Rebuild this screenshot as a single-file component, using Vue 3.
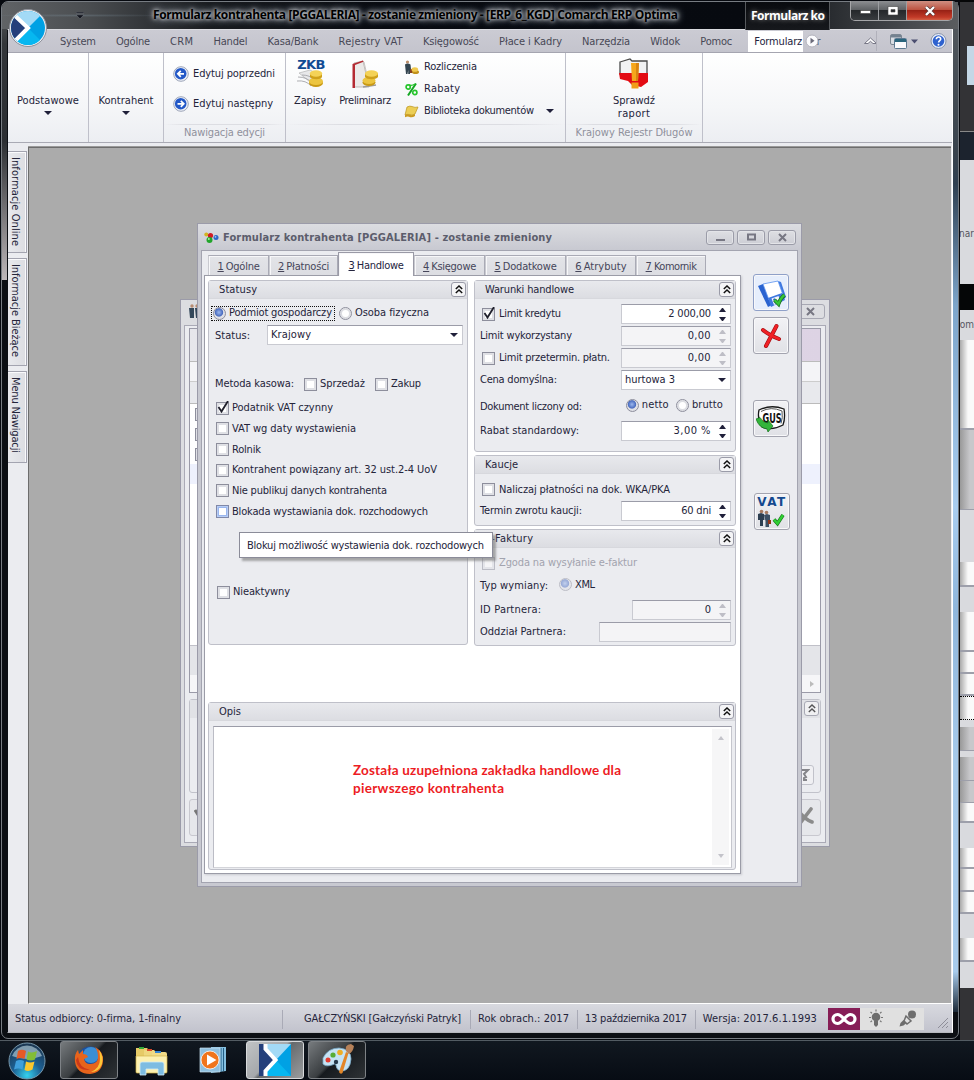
<script setup>
const vFit = {
  mounted(el, { value }) {
    const range = document.createRange()
    range.selectNodeContents(el)
    const natural = range.getBoundingClientRect()
    const size = Math.max(natural.width, natural.height > 40 ? natural.height : 0)
    const n = el.textContent.length
    if (n > 1) el.style.letterSpacing = (value - size) / (n - 1) + 'px'
  },
}

const menu = [
  ['System', 36], ['Ogólne', 34], ['CRM', 23], ['Handel', 34], ['Kasa/Bank', 51], ['Rejestry VAT', 64],
  ['Księgowość', 56], ['Płace i Kadry', 63], ['Narzędzia', 48], ['Widok', 30], ['Pomoc', 32],
]
const sideTabs = [
  { text: 'Informacje Online', w: 89, cls: 's1' },
  { text: 'Informacje Bieżące', w: 93, cls: 's2' },
  { text: 'Menu Nawigacji', w: 76, cls: 's3' },
]
const tabs = [
  { k: '1', t: 'Ogólne', w: 61, f: 35 },
  { k: '2', t: 'Płatności', w: 69, f: 44 },
  { k: '3', t: 'Handlowe', w: 76, f: 48, on: true },
  { k: '4', t: 'Księgowe', w: 71, f: 46 },
  { k: '5', t: 'Dodatkowe', w: 81, f: 55 },
  { k: '6', t: 'Atrybuty', w: 70, f: 44 },
  { k: '7', t: 'Komornik', w: 70, f: 44 },
]
const checks = [
  { t: 'Podatnik VAT czynny', w: 101, on: true, h: 20 },
  { t: 'VAT wg daty wystawienia', w: 124, h: 21 },
  { t: 'Rolnik', w: 29, h: 21 },
  { t: 'Kontrahent powiązany art. 32 ust.2-4 UoV', w: 205, h: 20 },
  { t: 'Nie publikuj danych kontrahenta', w: 155, h: 21 },
  { t: 'Blokada wystawiania dok. rozchodowych', w: 196, h: 21, hot: true },
]
const strips = [
  { h: 2, c: 'k' }, { h: 44, c: 'dk' }, { h: 39, c: 'ice' }, { h: 46, c: 'dk' }, { h: 29, c: 'navy' },
  { h: 124, c: 'lite tail', t: 'nar' }, { h: 26, c: 'k' }, { h: 30, c: 'lite mid', t: 'Pom' }, { h: 90, c: 'wh' }, { h: 80, c: 'gy' },
  { h: 52, c: 'lite' }, { h: 25, c: 'wh' }, { h: 25, c: 'lite' }, { h: 40, c: 'wh' }, { h: 22, c: 'wh' },
  { h: 22, c: 'wh' }, { h: 24, c: 'wh dots' }, { h: 7, c: 'lite' }, { h: 24, c: 'gy' }, { h: 6, c: 'lite' },
  { h: 24, c: 'gy' }, { h: 22, c: 'gy' }, { h: 20, c: 'wh' }, { h: 25, c: 'lite' }, { h: 21, c: 'wh' },
  { h: 23, c: 'wh' }, { h: 22, c: 'wh' }, { h: 24, c: 'lite' }, { h: 24, c: 'wh' }, { h: 26, c: 'lite' }, { h: 90, c: 'dk' },
]
</script>

<template>
  <div class="desktop">
    <div class="behind">
      <div v-for="(s, i) in strips" :key="i" class="strip" :class="s.c" :style="{ height: s.h + 'px' }">{{ s.t }}</div>
    </div>

    <div class="app">
      <div class="frame-l"></div>
      <div class="frame-r"></div>
      <header class="caption">
        <svg class="qat" width="8" height="7" viewBox="0 0 8 7"><path d="M0 0h8v1.3H0zM0 2.8h8L4 6.8z" fill="#11131c" stroke="#8c8f98" stroke-width=".4" /></svg>
        <span v-fit="525" class="caption-text">Formularz kontrahenta [PGGALERIA] - zostanie zmieniony - [ERP_6_KGD] Comarch ERP Optima</span>
        <div class="context"><span v-fit="74">Formularz ko</span></div>
        <div class="winbtns">
          <div class="wb w1"><svg width="12" height="10" viewBox="0 0 12 10"><rect x="1.5" y="4.5" width="10" height="3" fill="#fff" stroke="#444" stroke-width=".6" /></svg></div>
          <div class="wb w2"><svg width="12" height="10" viewBox="0 0 12 10"><path fill="#fff" fill-rule="evenodd" stroke="#444" stroke-width=".6" d="M1 .5h10v8.500H1zM4 3.500v2.500h4V3.500z" /></svg></div>
          <div class="wb w3"><svg width="12" height="10" viewBox="0 0 12 10"><path d="M2 1l8 8M10 1l-8 8" stroke="#533" stroke-width="3.600" /><path d="M2 1l8 8M10 1l-8 8" stroke="#fff" stroke-width="2.400" /></svg></div>
        </div>
      </header>

      <div class="client">
        <nav class="menu">
          <span v-for="m in menu" :key="m[0]" v-fit="m[1]">{{ m[0] }}</span>
          <div class="active-tab"><span v-fit="48">Formularz</span></div>
          <span class="rest">r</span>
          <svg class="scroller" width="14" height="14" viewBox="0 0 14 14"><circle cx="7" cy="7" r="6" fill="#fbfbfd" stroke="#b3b3bd" /><path d="M5.500 3.800v6L9.500 6.800z" fill="#6b6b7a" /></svg>
          <svg class="menu-icons" width="90" height="20" viewBox="0 0 90 20">
            <path d="M3.500 12.500l6-5.500 6 5.500h-3.500l-2.500-2.200-2.500 2.200z" fill="#fff" stroke="#777786" />
            <path d="M15.500 0v20" stroke="#b1b1bb" />
            <rect x="29.500" y="3.500" width="11" height="10" rx="1.500" fill="#d9dde3" stroke="#7b8692" /><path d="M30 4h10v2.500H30z" fill="#748290" />
            <rect x="33.500" y="7.500" width="12" height="10" rx="1" fill="#fafafd" stroke="#5b7890" /><path d="M34 8h11v3H34z" fill="#2a657d" />
            <path d="M50 8.500h7l-3.500 4z" fill="#4b4e70" />
            <circle cx="77.500" cy="10" r="7.500" fill="#e9eef8" stroke="#8794ab" /><circle cx="77.500" cy="10" r="5.800" fill="#2e62cf" />
            <path d="M75.300 8.200c0-3 4.700-2.700 4.400 0-.2 1.500-2.100 1.500-2.100 3.300" fill="none" stroke="#fff" stroke-width="1.600" /><circle cx="77.500" cy="13.700" r="1" fill="#fff" />
          </svg>
        </nav>

        <section class="ribbon">
          <div class="grp g1 big"><span v-fit="62">Podstawowe</span><i class="dn"></i></div>
          <div class="grp g2 big"><span v-fit="55">Kontrahent</span><i class="dn"></i></div>
          <div class="grp g3">
            <div class="nav-item">
              <svg width="16" height="16" viewBox="0 0 16 16"><circle cx="8" cy="8" r="7.300" fill="#eef1f8" stroke="#9da5b8" /><circle cx="7.700" cy="7.700" r="5.800" fill="#2358c7" /><path d="M11 7.800H5M7.800 4.800l-3 3 3 3" fill="none" stroke="#fff" stroke-width="1.700" /></svg>
              <span v-fit="82">Edytuj poprzedni</span>
            </div>
            <div class="nav-item">
              <svg width="16" height="16" viewBox="0 0 16 16"><circle cx="8" cy="8" r="7.300" fill="#eef1f8" stroke="#9da5b8" /><circle cx="7.700" cy="7.700" r="5.800" fill="#2358c7" /><path d="M4.500 7.800h6M7.800 4.800l3 3-3 3" fill="none" stroke="#fff" stroke-width="1.700" /></svg>
              <span v-fit="80">Edytuj następny</span>
            </div>
            <div class="foot"><span v-fit="81">Nawigacja edycji</span></div>
          </div>
          <div class="grp g4">
            <div class="g4-main">
              <div class="bigbtn zap">
                <div class="zkb"><b v-fit="28">ZKB</b>
                  <svg width="30" height="20" viewBox="0 0 30 20"><path d="M3 4l11-3 8 4-8 8z" fill="#e8e8ea" stroke="#aaa" stroke-width=".6" /><path d="M2 8q9 0 14 6M1 12q9-1 14 5M6 6q8 0 12 5" fill="none" stroke="#a5a5a9" stroke-width=".9" /><ellipse cx="20" cy="14" rx="7" ry="4" fill="#c99a14" /><ellipse cx="20" cy="12.200" rx="7" ry="3.800" fill="#ecc540" /><path d="M14 4v4c2 3 11 3 12 0V4z" fill="#cfa01b" /><ellipse cx="20" cy="4.500" rx="6.200" ry="3.300" fill="#f4d257" /></svg>
                </div>
                <span v-fit="32">Zapisy</span>
              </div>
              <div class="bigbtn pre">
                <svg width="32" height="32" viewBox="0 0 32 32"><path d="M5 4l9-2 6 26H5z" fill="#ebe9e8" stroke="#a9a4a2" stroke-width=".7" /><path d="M3.500 5L14 1.500l.5 1.300L6 6v23H3.500z" fill="#b42a32" /><path d="M15 3l5 22" stroke="#c9c5c3" /><path d="M14 28l13-2" stroke="#9e9b98" stroke-width="1.500" /><ellipse cx="20" cy="23.500" rx="6.500" ry="3.500" fill="#c99a14" /><ellipse cx="20" cy="21.500" rx="6.500" ry="3.500" fill="#ecc540" /><path d="M16 14v4c2 3 11 3 13 0v-4z" fill="#cfa01b" /><ellipse cx="22.500" cy="14.500" rx="6.500" ry="3.300" fill="#f4d257" /></svg>
                <span v-fit="52">Preliminarz</span>
              </div>
              <div class="smalls">
                <div><svg width="15" height="15" viewBox="0 0 15 15"><circle cx="3.500" cy="2" r="1.600" fill="#bb8d68" /><path d="M1 4.500q2.500-2 5.500 0L7 9H6v5H4.200v-4L3.500 14H2z" fill="#344550" /><path d="M6 9h3v4H6z" fill="#873f21" /><ellipse cx="11.500" cy="12" rx="3.500" ry="2" fill="#c2921b" /><ellipse cx="10.800" cy="9.500" rx="3.300" ry="2.300" fill="#f0c94f" /></svg><span v-fit="53">Rozliczenia</span></div>
                <div><svg width="15" height="15" viewBox="0 0 15 15"><path d="M12 1.500L4 13.500" stroke="#12a621" stroke-width="2" /><circle cx="4.200" cy="5" r="2.100" fill="none" stroke="#27c52c" stroke-width="1.700" /><path d="M5 3q3 1 6-1" fill="none" stroke="#27c52c" stroke-width="1.400" /><circle cx="10.800" cy="10.500" r="2.100" fill="none" stroke="#27c52c" stroke-width="1.700" /></svg><span v-fit="36">Rabaty</span></div>
                <div><svg width="15" height="15" viewBox="0 0 15 15"><path d="M3 3q3-1.500 5-.5 3 1.500 6 .5l-3 7q-3 2-6 .5-2-.5-4 .5z" fill="#ecce55" stroke="#ba941d" stroke-width=".7" /><path d="M1 11q2-1 4-.5 3 1.500 6-.5v2q-3 2-6 .7-2-.5-4 .5z" fill="#cb9b20" /></svg><span v-fit="110">Biblioteka dokumentów</span><i class="dn"></i></div>
              </div>
            </div>
            <div class="foot"></div>
          </div>
          <div class="grp g5">
            <svg class="krd" width="34" height="34" viewBox="0 0 34 34"><path d="M3 6l10-3 2 2h15v13H3z" fill="#f1f2f3" stroke="#4a4a4a" stroke-width="1.300" /><path d="M2 17h29v9l-7 5-9-2-4-4-8-2z" fill="#e30b13" /><path d="M14 7h8l-1 18h-6z" fill="#f5a61c" /><path d="M19 7h3l-1 18h-2z" fill="#d98412" /><rect x="14.500" y="26.500" width="7" height="6" fill="#f09c18" /></svg>
            <span v-fit="42" class="ln">Sprawdź</span><span v-fit="32" class="ln">raport</span>
            <div class="foot"><span v-fit="117">Krajowy Rejestr Długów</span></div>
          </div>
        </section>

        <div class="work">
          <aside class="dock">
            <div v-for="s in sideTabs" :key="s.text" class="dtab" :class="s.cls"><span v-fit="s.w">{{ s.text }}</span></div>
          </aside>

          <main class="mdi">
            <div class="win list">
              <div class="list-title">
                <svg width="20" height="16" viewBox="0 0 20 16"><circle cx="3" cy="2" r="1.700" fill="#b78c72" /><circle cx="8" cy="2" r="1.700" fill="#b78c72" /><path d="M0 4h5v10H1zM6 4h5v10H7z" fill="#34485b" /></svg>
                <div class="xbtn"><svg width="9" height="9" viewBox="0 0 9 9"><path d="M1 1l7 7M8 1L1 8" stroke="#777783" stroke-width="2" /></svg></div>
              </div>
              <div class="list-body">
                <div class="grid-box"><div class="gh"></div><div class="gs"></div><div class="gt"></div>
                  <div class="grows"><i v-for="n in 4" :key="n" class="cb"></i></div>
                  <div class="gsel"></div><div class="gfoot"></div><div class="gscroll"><i></i></div>
                </div>
                <div class="lpanel"><div class="lhead"><span class="chev dim"><svg width="8" height="9" viewBox="0 0 8 9"><path d="M.8 4L4 1l3.200 3M.8 8L4 5l3.200 3" fill="none" stroke="#333" stroke-width="1.400" /></svg></span></div><div class="lbtn"><svg width="8" height="12" viewBox="0 0 8 12"><path d="M0 1h6l-4 4 2 3-2 1v2h3" fill="none" stroke="#85858a" stroke-width="2" /></svg></div></div>
                <div class="lfoot"><svg width="14" height="20" viewBox="0 0 14 20"><path d="M1 3l5 8 6-10" fill="none" stroke="#777" stroke-width="3" /></svg><svg width="20" height="22" viewBox="0 0 20 22"><path d="M2 3q6 9 14 12M15 2L2 19" fill="none" stroke="#8b8b8b" stroke-width="3.600" stroke-linecap="round" /></svg></div>
              </div>
            </div>

            <div class="win form">
              <div class="form-title">
                <svg width="15" height="12" viewBox="0 0 15 12"><circle cx="2.300" cy="2.500" r="2" fill="#d2b423" /><circle cx="6.500" cy="3.500" r="2.600" fill="#d01c26" /><circle cx="5.500" cy="8" r="3" fill="#22a52c" /><circle cx="12" cy="5.500" r="2.500" fill="#2b67c8" /><circle cx="11.500" cy="4.800" r=".9" fill="#a8c4f0" /><circle cx="4.800" cy="7" r="1" fill="#a6f0a0" /></svg>
                <span v-fit="329">Formularz kontrahenta [PGGALERIA] - zostanie zmieniony</span>
                <div class="fbtns">
                  <div><svg width="13" height="9" viewBox="0 0 13 9"><path d="M2 6h9v2H2z" fill="#777783" /></svg></div>
                  <div><svg width="13" height="9" viewBox="0 0 13 9"><rect x="3" y="1.500" width="7" height="5" fill="none" stroke="#777783" stroke-width="2" /></svg></div>
                  <div><svg width="13" height="9" viewBox="0 0 13 9"><path d="M3 1l7 7M10 1L3 8" stroke="#777783" stroke-width="2" /></svg></div>
                </div>
              </div>
              <div class="form-body">
                <div class="left-part">
                  <div class="tabs">
                    <div v-for="t in tabs" :key="t.k" class="tab" :class="{ on: t.on }" :style="{ width: t.w + 'px' }"><u>{{ t.k }}</u><span v-fit="t.f - 1">{{ t.t }}</span></div>
                  </div>
                  <div class="page">
                    <div class="cols">
                      <div class="panel status-panel">
                        <div class="ph"><span v-fit="38">Statusy</span><span class="chev"><svg width="8" height="9" viewBox="0 0 8 9"><path d="M.8 4L4 1l3.200 3M.8 8L4 5l3.200 3" fill="none" stroke="#111" stroke-width="1.500" /></svg></span></div>
                        <div class="row r-radio">
                          <label class="focus"><i class="rd on"></i><span v-fit="103">Podmiot gospodarczy</span></label>
                          <i class="rd"></i><span v-fit="74">Osoba fizyczna</span>
                        </div>
                        <div class="row r-status"><span v-fit="35" class="low1">Status:</span><div class="field combo"><span v-fit="40">Krajowy</span><i class="dn"></i></div></div>
                        <div class="row r-met"><span v-fit="79" class="lb">Metoda kasowa:</span><i class="cb"></i><span v-fit="45" class="a">Sprzedaż</span><i class="cb b"></i><span v-fit="30">Zakup</span></div>
                        <div class="checks">
                          <div v-for="c in checks" :key="c.t" class="row" :style="{ height: c.h + 'px' }">
                            <i class="cb" :class="{ hot: c.hot }"><svg v-if="c.on" width="14" height="14" viewBox="0 0 14 14"><path d="M2.500 6l3 4.500L12 0" fill="none" stroke="#20202c" stroke-width="1.800" /></svg></i>
                            <span v-fit="c.w">{{ c.t }}</span>
                          </div>
                        </div>
                        <div class="row r-nie"><i class="cb"></i><span v-fit="57">Nieaktywny</span></div>
                        <div class="tip"><span v-fit="237">Blokuj możliwość wystawienia dok. rozchodowych</span></div>
                      </div>

                      <div class="rcol">
                        <div class="panel p1">
                          <div class="ph"><span v-fit="89">Warunki handlowe</span><span class="chev"><svg width="8" height="9" viewBox="0 0 8 9"><path d="M.8 4L4 1l3.200 3M.8 8L4 5l3.200 3" fill="none" stroke="#111" stroke-width="1.500" /></svg></span></div>
                          <div class="row t4"><i class="cb in"><svg width="14" height="14" viewBox="0 0 14 14"><path d="M2.500 6l3 4.500L12 0" fill="none" stroke="#20202c" stroke-width="1.800" /></svg></i><span v-fit="62">Limit kredytu</span><div class="field num"><span v-fit="43">2 000,00</span><i class="sp"></i></div></div>
                          <div class="row"><span v-fit="92">Limit wykorzystany</span><div class="field num off"><span v-fit="23">0,00</span><i class="sp"></i></div></div>
                          <div class="row"><i class="cb in"></i><span v-fit="111">Limit przetermin. płatn.</span><div class="field num off"><span v-fit="23">0,00</span><i class="sp"></i></div></div>
                          <div class="row"><span v-fit="77">Cena domyślna:</span><div class="field num cmb"><span v-fit="50">hurtowa 3</span><i class="dn"></i></div></div>
                          <div class="row t3"><span v-fit="102" class="low">Dokument liczony od:</span><div class="radios"><i class="rd on"></i><span v-fit="27">netto</span><i class="rd"></i><span v-fit="31">brutto</span></div></div>
                          <div class="row t4"><span v-fit="99">Rabat standardowy:</span><div class="field num"><span v-fit="37">3,00 %</span><i class="sp"></i></div></div>
                        </div>
                        <div class="panel p2">
                          <div class="ph"><span v-fit="33">Kaucje</span><span class="chev"><svg width="8" height="9" viewBox="0 0 8 9"><path d="M.8 4L4 1l3.200 3M.8 8L4 5l3.200 3" fill="none" stroke="#111" stroke-width="1.500" /></svg></span></div>
                          <div class="row t5 h21"><i class="cb in"></i><span v-fit="171">Naliczaj płatności na dok. WKA/PKA</span></div>
                          <div class="row"><span v-fit="102">Termin zwrotu kaucji:</span><div class="field num"><span v-fit="30">60 dni</span><i class="sp"></i></div></div>
                        </div>
                        <div class="panel p3">
                          <div class="ph"><span v-fit="48">e-Faktury</span><span class="chev"><svg width="8" height="9" viewBox="0 0 8 9"><path d="M.8 4L4 1l3.200 3M.8 8L4 5l3.200 3" fill="none" stroke="#111" stroke-width="1.500" /></svg></span></div>
                          <div class="row t4 dis"><i class="cb in"></i><span v-fit="138">Zgoda na wysyłanie e-faktur</span></div>
                          <div class="row typ"><span v-fit="68" class="low1">Typ wymiany:</span><i class="rd on pale"></i><span v-fit="20">XML</span></div>
                          <div class="row t3"><span v-fit="61">ID Partnera:</span><div class="field num off idp"><span>0</span><i class="sp"></i></div></div>
                          <div class="row"><span v-fit="86">Oddział Partnera:</span><div class="field num off odd"></div></div>
                        </div>
                      </div>
                    </div>
                    <div class="panel opis">
                      <div class="ph"><span v-fit="22">Opis</span><span class="chev"><svg width="8" height="9" viewBox="0 0 8 9"><path d="M.8 4L4 1l3.200 3M.8 8L4 5l3.200 3" fill="none" stroke="#111" stroke-width="1.500" /></svg></span></div>
                      <div class="area">
                        <div class="note"><span v-fit="268">Została uzupełniona zakładka handlowe dla</span><span v-fit="151">pierwszego kontrahenta</span></div>
                        <div class="vs"><i class="up"></i><i class="dn"></i></div>
                      </div>
                    </div>
                  </div>
                </div>
                <div class="tools">
                  <div class="tool save"><svg width="30" height="30" viewBox="0 0 30 30"><path d="M2 8l5-2 9 21-4 2z" fill="#2a63d0" /><path d="M22 3l3 1 5 15-3 3z" fill="#3f78e0" /><path d="M7 6l15-3 5 14-14 5z" fill="#fff" stroke="#5a92ee" stroke-width=".8" /><path d="M12 20l14-5 3 7-14 7z" fill="#3f78e0" /><path d="M15.500 20.500l7-2.500 2.500 6-7 3z" fill="#f2f5fb" /><path d="M17 21l2-.8 2 4.500-2 1z" fill="#2a5fc6" /><path d="M18.500 22l4 4q2-6 6-9" fill="none" stroke="#116a15" stroke-width="3.800" /><path d="M18.500 22l4 4q2-6 6-9" fill="none" stroke="#37c639" stroke-width="2.400" /></svg></div>
                  <div class="tool del"><svg width="24" height="26" viewBox="0 0 24 26"><path d="M4 7q6 5 16 9M17.500 3L7 23" fill="none" stroke="#9e0b10" stroke-width="4" stroke-linecap="round" /><path d="M4 7q6 5 16 9M17.500 3L7 23" fill="none" stroke="#f02126" stroke-width="2.800" stroke-linecap="round" /></svg></div>
                  <div class="tool gus"><svg width="30" height="28" viewBox="0 0 30 28"><path d="M3 5Q15-1 28 4q1.500 9-1 16-11 6-21 2-5-8-3-17z" fill="#fff" stroke="#181818" stroke-width="1.300" /><path d="M5 6.500Q15 1 26 6q1 7-1 12.500" fill="none" stroke="#555" /><text x="16" y="18" textLength="19" lengthAdjust="spacingAndGlyphs" text-anchor="middle" font-size="14" font-weight="bold" font-family="DejaVu Sans Condensed, sans-serif" fill="#111">GUS</text><path d="M0 14l4-1.500q3 5.500 8 5.500l0-3 5 6-5 6-1-3Q3 23 0 14z" fill="#33b43a" stroke="#13701a" stroke-width=".7" /></svg></div>
                  <div class="tool vat"><b v-fit="28">VAT</b><svg width="30" height="18" viewBox="0 0 30 18"><circle cx="4.500" cy="2.500" r="1.800" fill="#a57a60" /><circle cx="9.500" cy="3.500" r="1.800" fill="#a57a60" /><path d="M1 5l3-1 3 1 .5 6H6v6H3v-6H1z" fill="#2d3f51" /><path d="M7 6l3-1 3 1v6h-1v6H8.500v-6z" fill="#3c5064" /><rect x="11" y="11" width="3" height="4" fill="#953418" /><path d="M17 10.500l3.500 4L26 6" fill="none" stroke="#147218" stroke-width="3.600" /><path d="M17 10.500l3.500 4L26 6" fill="none" stroke="#30cf34" stroke-width="2.400" /></svg></div>
                </div>
              </div>
            </div>
          </main>
        </div>

        <footer class="status">
          <span v-fit="166" class="st1">Status odbiorcy: 0-firma, 1-finalny</span>
          <i class="sep"></i><span v-fit="157" class="st2">GAŁCZYŃSKI [Gałczyński Patryk]</span>
          <i class="sep"></i><span v-fit="91" class="st3">Rok obrach.: 2017</span>
          <i class="sep"></i><span v-fit="102" class="st3">13 października 2017</span>
          <i class="sep"></i><span v-fit="114" class="st3">Wersja: 2017.6.1.1993</span>
          <div class="inf"><svg width="26" height="14" viewBox="0 0 26 14"><path d="M13 7C10 3.500 8.500 2.500 6.500 2.500a4.500 4.500 0 000 9C8.500 11.500 10 10.500 13 7s4.500-4.500 6.500-4.500a4.500 4.500 0 010 9C17.500 11.500 16 10.500 13 7z" fill="none" stroke="#fff" stroke-width="3.200" /></svg></div>
          <div class="trayic">
            <svg width="64" height="22" viewBox="0 0 64 22"><circle cx="16" cy="9" r="4.300" fill="#6d6d6d" /><path d="M14 13h4v4l-2 2-2-2z" fill="#6d6d6d" /><path d="M16 1.500v2M10.500 4l1.500 1.300M21.500 4L20 5.300M9 9.500h2M21 9.500h2M10.500 14l1.500-1.200M21.500 14L20 12.800" stroke="#777" stroke-width="1.200" /><circle cx="52" cy="6.500" r="4" fill="#6d6d6d" /><path d="M46 8l5 5-4 3-3-3z" fill="none" stroke="#6d6d6d" stroke-width="1.500" /><path d="M43.500 12l3 3-3 2.500-4 1 1-3.500z" fill="#6d6d6d" /></svg>
          </div>
          <svg class="grip" width="12" height="12" viewBox="0 0 12 12"><path d="M1 11L11 1M5 11l6-6M9 11l2-2" stroke="#8e8e99" stroke-width="1" /></svg>
        </footer>
      </div>
    </div>

    <svg class="orb" width="40" height="40" viewBox="0 0 40 40">
      <defs><clipPath id="o"><circle cx="20" cy="20" r="17" /></clipPath></defs>
      <circle cx="20" cy="20" r="18.500" fill="#eef0f4" stroke="#8d9099" stroke-width="1" />
      <g clip-path="url(#o)"><path d="M0 0h40v40H0z" fill="#00a1e4" /><path d="M0 0h40L20 20z" fill="#a3daf6" /><path d="M0 40h40L20 20z" fill="#06b7f0" /><path d="M0 3L18 20 0 37z" fill="#243f7b" /><path d="M2 3l18 17L2 38" fill="none" stroke="#fff" stroke-width="4" /></g>
    </svg>

    <div class="taskbar">
      <svg class="start" width="40" height="39" viewBox="0 0 40 39"><defs><radialGradient id="s1" cx=".5" cy=".9" r=".9"><stop offset="0" stop-color="#35d1ee" /><stop offset=".45" stop-color="#1c5f93" /><stop offset="1" stop-color="#1b344d" /></radialGradient></defs><circle cx="20" cy="20" r="18" fill="url(#s1)" stroke="#7798ad" /><path d="M5 15a16 16 0 0130 0q-15 6-30 0z" fill="#b5ced9" opacity=".65" /><path d="M11 10q4-2.500 8 0l-1.500 8q-4-2-8 0z" fill="#e55a26" /><path d="M21 10.500q4 2 9-.5l-2 8.500q-4 2-8.500 0z" fill="#82bd37" /><path d="M9 20q4-2 8 0l-1.500 8.500q-4-2-8.500 0z" fill="#3f9fdc" /><path d="M19 20.500q4 2 8.500 0l-2 8q-4 2.500-8 .5z" fill="#fbc72e" /></svg>
      <div class="tb lit b1"><svg width="32" height="32" viewBox="0 0 32 32"><circle cx="17" cy="15" r="12.500" fill="#1c4f9f" /><circle cx="18" cy="11" r="8" fill="#3c8ed5" /><path d="M22 3q9 5 8 14-1 12-13 13Q4 30 2 18 1 10 5 6l1 4 4-4v4q4 0 5 3l-4 2q1 5 6 5 8 0 8-7 0-6-3-10z" fill="#e8641b" /><path d="M26 6q5 6 3 14-3 8-11 8 9-4 9-13 0-5-1-9z" fill="#fbc638" /><path d="M5 13q1 11 12 13-13 1-14-10z" fill="#cc391a" /></svg></div>
      <div class="tb b2"><svg width="34" height="32" viewBox="0 0 34 32"><path d="M2 4h11l2 2v22H2z" fill="#e6ca67" /><path d="M10 6h10l2 2v20H10z" fill="#eed77e" /><path d="M18 8h13q2 0 2 2v17H18z" fill="#f1db87" /><path d="M2 12h31v16q0 1-1 1H3q-1 0-1-1z" fill="#fcf0b0" stroke="#d3b449" stroke-width=".7" /><path d="M5 3h5v2H5z" fill="#35a839" /><path d="M13 5h5v2h-5z" fill="#db4528" /><path d="M21 7h6v2h-6z" fill="#3283d3" /><path d="M6 31V20q0-2 2-2h20q2 0 2 2v11h-6v-6H12v6z" fill="#7dbce2" stroke="#d1ebf6" stroke-width=".8" /></svg></div>
      <div class="tb b3"><svg width="28" height="28" viewBox="0 0 28 28"><path d="M12 1h15v24l-15 2z" fill="#85bfe0" /><path d="M22 2v24M24.500 2v23" stroke="#235f86" stroke-width="1" /><path d="M1 2h20v24H1z" fill="#8fc0df" stroke="#cce3f1" stroke-width=".7" /><circle cx="11" cy="14" r="9" fill="#f0751c" stroke="#fff" stroke-width=".8" /><path d="M8 8.500v11l9.500-5.500z" fill="#fff" /></svg></div>
      <div class="tb bright b4"><svg width="32" height="32" viewBox="0 0 32 32"><path d="M0 0h32v32H0z" fill="#00a1e4" /><path d="M4 0h28L17 16z" fill="#a3daf6" /><path d="M4 32h28L17 16z" fill="#06b7f0" /><path d="M0 0h5v5l11 11L5 27v5H0z" fill="#243f7b" /><path d="M6.500 0v5l10 11-10 11v5" fill="none" stroke="#fff" stroke-width="4" /></svg></div>
      <div class="tb lit b5"><svg width="34" height="34" viewBox="0 0 34 34"><path d="M3 15Q8 5 19 5q12 1 12 11-1 13-11 12-4-2-4-6-1-2-4 0-6 2-9-1z" fill="#c5e3f4" stroke="#78aac8" stroke-width=".8" /><circle cx="8" cy="17" r="2.500" fill="#e23c31" /><circle cx="13" cy="12" r="2.600" fill="#58ad35" /><circle cx="20" cy="9.500" r="2.800" fill="#efae25" /><circle cx="16" cy="19" r="2.200" fill="#26394b" /><path d="M19 29l7-20 2.500 1-6 20q-2 2-3.500-1z" fill="#e28628" /><path d="M26 8q-2-6 5-7l3 2q-1 6-5 8z" fill="#b68159" /></svg></div>
    </div>
  </div>
</template>

<style>
html, body { margin: 0; background: #05080d; }
</style>

<style scoped>
* { box-sizing: border-box; }
i { font-style: normal; display: block; flex: none; }
svg { display: block; flex: none; }
.desktop { position: relative; width: 974px; height: 1080px; overflow: hidden; background: #06090f; font: 11px/14px 'DejaVu Sans Condensed', 'DejaVu Sans', sans-serif; font-stretch: condensed; color: #24243a; white-space: nowrap; }
span { flex: none; }

.behind { position: absolute; left: 960px; top: 0; width: 14px; height: 1040px; display: flex; flex-direction: column; font-size: 10px; color: #55565f; }
.strip { flex: none; overflow: hidden; direction: rtl; }
.k { background: #050607; }
.dk { background: #333336; }
.ice { background: linear-gradient(90deg, #333336 7px, #c4d7e6 7px); }
.navy { background: #1c232e; border-top: 1px solid #888; }
.lite { background: #d9dade; }
.tail { padding-top: 67px; }
.mid { padding-top: 8px; }
.wh { background: linear-gradient(90deg, #aaa, #fafafa 8px); border-bottom: 2px solid #9d9faa; }
.dots { border-top: 1px dotted #000; border-bottom: 1px dotted #000; }
.gy { background: linear-gradient(90deg, #999, #c8c8cb 10px); border-bottom: 1px solid #9d9faa; }

.app { position: absolute; left: 1px; top: 1px; width: 958px; height: 1038px; border: 1px solid #777c82; border-radius: 7px; background: #0b0e13; display: flex; flex-direction: column; padding: 0 6px 5px; }
.frame-l { position: absolute; left: 0; top: 0; width: 5px; height: 278px; background: linear-gradient(#5c5e60, #33363a 15%, #2b2e32 50%, #bdb7b9); border-radius: 6px 0 0 0; }
.frame-r { position: absolute; right: 0; top: 0; width: 5px; height: 1010px; background: linear-gradient(#555a5f, #39434d 15%, #2f4052 18%, #7da5cb 30%, #a9cdf0 50%, #8fb6dc 60%, #a6c9ea 75%, #a8cbec 96%, #1b2837); }
.caption { position: relative; height: 27px; margin: 0 -6px; flex: none; display: flex; background: radial-gradient(ellipse at 8% 50%, #7f93a055, transparent 8%), linear-gradient(90deg, #606366, #4a4d50 9%, #181b1f 22%, #080b11 40%, #070a10 78%, #2a2d31 87%, #5a5d60); border-radius: 6px 6px 0 0; padding-left: 74px; }
.qat { margin-top: 10px; }
.caption-text { font: bold 12px/14px 'Open Sans', 'Noto Sans', sans-serif; color: #000; margin: 6px 0 0 69px; height: 14px; text-shadow: 0 0 4px #c6c9ce, 0 0 7px #aab0b8, 0 0 10px #8b929b, 0 0 3px #999; width: 526px; }
.context { width: 85px; height: 29px; margin-left: 66px; padding: 7px 0 0 5px; font: bold 12px/14px 'Open Sans', 'Noto Sans', sans-serif; color: #fff; text-shadow: 0 0 5px #888; background: linear-gradient(#090b0f, #17191d); border: solid #56595d; border-width: 0 1px; }
.winbtns { position: absolute; left: 848px; top: -1px; width: 103px; height: 20px; display: flex; border: 1px solid #a5a6a8; border-top: 0; border-radius: 0 0 5px 5px; overflow: hidden; }
.wb { width: 28px; height: 19px; display: flex; align-items: center; justify-content: center; background: linear-gradient(#8c8e91, #606366 45%, #25282b 50%, #393c3f); border-right: 1px solid #9c9ea1; }
.w3 { width: 45px; border: 0; background: linear-gradient(#cf8f82, #bd5442 45%, #992216 50%, #c23a28 85%, #d35f44); }

.client { flex: 1; min-height: 0; display: flex; flex-direction: column; background: #ebecf0; border: 1px solid #b6b8be; border-top-color: #dadbe0; margin: 0 -1px; border-left-color: #0b0e13; border-right-color: #fff; }
.menu { position: relative; height: 23px; flex: none; display: flex; gap: 20.2px; align-items: center; padding-left: 52px; background: linear-gradient(#cbcbd3, #c4c4cd); border-bottom: 1px solid #a5a5b0; color: #484856; }
.menu > span { position: relative; top: 1px; }
.active-tab { margin-left: -4px; width: 55px; flex: none; height: 21px; align-self: flex-end; background: #fff; padding: 4px 0 0 6px; color: #24243e; }
.menu > .rest { margin-left: -7px; }
.scroller { position: absolute; left: 797px; top: 4px; }
.menu-icons { position: absolute; left: 853px; top: 1px; }

.ribbon { height: 90px; flex: none; display: flex; background: linear-gradient(#fff, #f5f6f8 60%, #eceef2); border-bottom: 1px solid #a9aab4; }
.grp { flex: none; height: 89px; border-right: 1px solid #bfc0ca; display: flex; flex-direction: column; position: relative; }
.dn { width: 0; height: 0; border: 4px solid transparent; border-top: 4px solid #20203a; border-bottom: 0; }
.big { align-items: center; padding-top: 41px; }
.big .dn { margin-top: 3px; }
.g1 { width: 81px; } .g2 { width: 75px; } .g3 { width: 122px; } .g4 { width: 280px; } .g5 { width: 137px; align-items: center; }
.g3 { padding-top: 6px; }
.nav-item { display: flex; align-items: center; gap: 4px; height: 30px; padding-left: 9px; }
.foot { height: 18px; width: 100%; text-align: center; color: #8f909c; margin-top: auto; padding-top: 2px; background: linear-gradient(90deg, transparent, #dcdde2 20%, #dcdde2 80%, transparent) top / 100% 1px no-repeat; }
.g4-main { display: flex; height: 71px; }
.bigbtn { display: flex; flex-direction: column; align-items: center; }
.zap { width: 48px; padding-top: 5px; }
.zkb { height: 36px; display: flex; flex-direction: column; align-items: center; margin-left: 2px; }
.zkb b { font: bold 13px/14px 'DejaVu Sans', sans-serif; font-stretch: normal; color: #104b93; }
.zkb svg { margin-top: -3px; }
.pre { width: 62px; padding-top: 6px; }
.pre span { margin-top: 3px; }
.smalls { padding: 3px 0 0 8px; }
.smalls > div { display: flex; height: 22px; align-items: center; gap: 5px; }
.smalls .dn { margin-left: 7px; }
.krd { margin: 3px 0 4px; }
.ln { line-height: 13px; }

.work { flex: 1; min-height: 0; display: flex; }
.dock { width: 19px; flex: none; padding-top: 8px; }
.dtab { width: 19px; writing-mode: vertical-rl; border: 1px solid #a3a4b0; border-left: 0; background: linear-gradient(90deg, #e8e9ed, #dcdde2); box-shadow: inset -1px 1px #fafafc; padding: 5px 4px 0 0; line-height: 14px; margin-bottom: 5px; }
.s1 { height: 102px; } .s2 { height: 108px; } .s3 { height: 92px; }
.mdi { position: relative; flex: 1; margin: 4px 1px 0 1px; background: #ababab; border: solid #6d6d6d; border-width: 1px 0 0 1px; border-bottom: 1px solid #fff; box-shadow: 0 -1px #9a9a9a; }

.win { position: absolute; border: 1px solid #9b9ba9; display: flex; flex-direction: column; }
.list { left: 151px; top: 151px; width: 650px; height: 548px; background: #dcdde1; }
.list-title { height: 25px; display: flex; justify-content: space-between; padding: 4px 4px 0 8px; flex: none; }
.xbtn { width: 29px; height: 15px; border: 1px solid #a7a8b3; border-radius: 3px; display: flex; justify-content: center; align-items: center; }
.list-body { flex: 1; margin: 0 3px 3px; border: 1px solid #aaaab6; background: #ebecf0; padding: 2px 4px 0 4px; }
.grid-box { height: 365px; border: 1px solid #9a9aa8; background: #fff; display: flex; flex-direction: column; }
.gh { height: 33px; background: linear-gradient(90deg, #e6e6eb, #ddd3e4); border-bottom: 1px solid #bbb; flex: none; }
.gs { height: 20px; background: #f4f4f7; border-bottom: 1px solid #ccc; flex: none; }
.gt { height: 22px; background: #e8e9ed; border-bottom: 1px solid #bbb; flex: none; }
.grows { display: flex; flex-direction: column; gap: 7px; padding: 4px 0 0 5px; height: 60px; flex: none; overflow: hidden; }
.gsel { height: 20px; background: #eef1fd; flex: none; }
.gfoot { height: 30px; background: #e4e5e9; border-top: 1px solid #c0c0c8; margin-top: auto; }
.gscroll { height: 17px; background: #f6f6f8; display: flex; justify-content: flex-end; align-items: center; padding-right: 6px; }
.gscroll i { border: 3px solid transparent; border-left: 4px solid #bbb; border-right: 0; }
.lpanel { height: 94px; border: 1px solid #c1c2ca; border-radius: 3px; margin-top: 6px; display: flex; flex-direction: column; align-items: flex-end; }
.lhead { height: 18px; width: 100%; background: #e1e2e6; display: flex; padding: 1px; }
.dim { opacity: .8; }
.lbtn { width: 24px; height: 20px; margin: 47px 6px 0 0; border: 1px solid #c1c2ca; border-radius: 3px; background: #f0f0f3; padding: 3px 0 0 11px; }
.lfoot { height: 37px; border: 1px solid #c8c8cf; border-radius: 3px; margin-top: 6px; display: flex; justify-content: space-between; padding: 7px 4px; background: #e6e7eb; }

.form { left: 168px; top: 75px; width: 605px; height: 664px; background: #c8c9d1; }
.form-title { height: 26px; flex: none; display: flex; align-items: center; padding: 1px 5px 0 6px; background: linear-gradient(#dcdde1, #c8c9d1); color: #5c5d6c; font-weight: bold; }
.form-title > span { margin-left: 4px; }
.fbtns { display: flex; gap: 3px; margin-left: auto; }
.fbtns div { width: 28px; height: 15px; border: 1px solid #9b9ca8; border-radius: 3px; display: flex; align-items: center; justify-content: center; background: linear-gradient(#dedfe3, #cdced5); box-shadow: inset 0 0 0 1px #e3e4e8; }
.form-body { flex: 1; min-height: 0; margin: 0 3px 3px; border: 1px solid #a3a4b0; background: #ebecf0; display: flex; }
.left-part { width: 539px; flex: none; padding: 2px 0 0 2px; }
.tabs { height: 22px; display: flex; align-items: flex-end; padding-left: 4px; position: relative; }
.tab { height: 20px; flex: none; border: 1px solid #a9aab5; border-bottom: 0; border-left-color: #c9cad0; background: linear-gradient(#e3e4e8, #dcdde2); box-shadow: inset 1px 1px #f7f7f9; display: flex; justify-content: center; align-items: center; gap: 2px; color: #46465a; padding-top: 2px; }
.tab u { text-decoration: underline; text-underline-offset: 1px; }
.tab.on { height: 24px; margin-bottom: -1px; background: #fff; border-color: #9a9aa6; color: #24243e; position: relative; padding-bottom: 0; }
.page { width: 537px; height: 599px; border: 1px solid #9b9ca7; background: #fff; padding: 4px 3px; box-shadow: 1px 1px 2px #c9cad0; }
.cols { display: flex; gap: 6px; height: 366px; }
.panel { border: 1px solid #bfc0c9; border-radius: 3px; background: #ebecf0; width: 262px; }
.ph { height: 18px; display: flex; align-items: center; padding: 0 1px 0 10px; background: linear-gradient(#e8e9ed, #dcdde2); border-bottom: 1px solid #d7d8dd; }
.chev { width: 15px; height: 15px; margin-left: auto; border: 1px solid #9a9ba8; border-radius: 3px; background: #f4f4f6; display: flex; align-items: center; justify-content: center; }
.row { display: flex; align-items: center; height: 22px; padding: 0 4px 0 5px; }
.status-panel { position: relative; width: 260px; height: 365px; }
.rcol { display: flex; flex-direction: column; gap: 3px; }
.p1 { height: 172px; } .p2 { height: 71px; } .p3 { height: 117px; }

.cb { width: 13px; height: 13px; border: 1px solid #8d8e9c; background: #fff; box-shadow: inset 0 0 0 2px #dfe0e5; position: relative; margin-right: 3px; }
.cb svg { position: absolute; left: -1px; top: -2px; }
.cb.in { margin-left: 2px; margin-right: 4px; }
.cb.hot { border-color: #8088a8; box-shadow: inset 0 0 0 1px #b7cdf5, inset 0 0 0 2px #9ab6ee; }
.rd { width: 13px; height: 13px; border-radius: 50%; border: 1px solid #8d8e9c; background: #fff; box-shadow: inset 0 0 0 2px #dcdde2; }
.rd.on { background: radial-gradient(circle at 45% 40%, #9cb8ee, #4a6cc0 42%, #dfe0e6 52%); box-shadow: none; }
.pale { opacity: .5; }
.field { background: #fff; border: 1px solid #c9cad1; border-top-color: #9b9ca8; height: 20px; display: flex; align-items: center; }
.off { background: #f4f4f6; }
.r-radio { height: 20px; margin-top: 4px; padding-left: 3px; }
.focus { display: flex; align-items: center; gap: 3px; height: 13px; width: 122px; outline: 1px dotted #111; padding-left: 1px; }
.r-radio > .rd { margin: 0 3px 0 5px; }
.r-status { height: 20px; margin-top: 2px; padding-left: 6px; }
.lb { display: block; }
.combo { width: 196px; margin-left: auto; padding: 0 4px 0 3px; justify-content: space-between; }
.r-met { height: 20px; margin-top: 29px; padding-left: 6px; }
.r-met .lb { width: 89px; }
.r-met .a { width: 55px; }
.checks { margin-top: 4px; }
.checks .row { padding-left: 7px; }
.r-nie { height: 20px; margin-top: 60px; padding-left: 8px; }
.tip { position: absolute; z-index: 3; left: 30px; top: 251px; width: 254px; height: 26px; border: 1px solid #8b8c99; background: #fff; padding: 6px 0 0 7px; box-shadow: 3px 3px 2px #77777799; }
.num { width: 110px; margin-left: auto; justify-content: flex-end; padding-right: 4px; }
.num .sp { margin-left: 8px; }
.cmb { justify-content: space-between; padding-left: 3px; }
.sp { width: 7px; height: 13px; display: flex; flex-direction: column; justify-content: space-between; }
.sp::before, .sp::after { content: ''; border: 3.500px solid transparent; }
.sp::before { border-top: 0; border-bottom: 4px solid #20203a; }
.sp::after { border-bottom: 0; border-top: 4px solid #20203a; }
.off .sp { opacity: .25; }
.t3 { margin-top: 3px; } .t4 { margin-top: 4px; } .t5 { margin-top: 5px; } .h21 { height: 21px; }
.low { position: relative; top: 2px; } .low1 { position: relative; top: 1px; }
.radios { display: flex; align-items: center; gap: 3px; margin-left: auto; padding-right: 8px; }
.radios .rd:nth-of-type(2) { margin-left: 4px; }
.dis { color: #a2a3ae; }
.dis .cb { opacity: .5; }
.typ .rd { margin: -1px 3px 0 11px; }
.idp { width: 99px; }
.odd { width: 132px; }
.opis { width: 528px; height: 168px; margin-top: 56px; }
.area { height: 142px; margin: 5px 3px 0 4px; border: 1px solid #9b9ca8; border-color: #9b9ca8 #c5c6cd #d4d5da #bbbcc5; background: #fff; display: flex; justify-content: space-between; padding: 2px; }
.note { display: flex; flex-direction: column; align-items: flex-start; padding: 32px 0 0 137px; font: bold 13.5px/18px Lato, 'Open Sans', sans-serif; color: #ed1c24; font-stretch: normal; }
.vs { width: 17px; background: #f4f4f6; display: flex; flex-direction: column; justify-content: space-between; align-items: center; padding: 7px 0; opacity: .8; }
.vs .up { border: 3px solid transparent; border-top: 0; border-bottom: 4px solid #b5b5bd; }
.vs .dn { border: 3px solid transparent; border-bottom: 0; border-top: 4px solid #b5b5bd; }

.tools { padding: 23px 0 0 12px; display: flex; flex-direction: column; }
.tool { width: 36px; height: 37px; border: 1px solid #a3a4af; border-radius: 3px; background: linear-gradient(#f2f2f5, #e0e1e6); display: flex; flex-direction: column; align-items: center; justify-content: center; box-shadow: inset 0 0 0 1px #f8f8fa; }
.save { background: #e6eefc; border-color: #8fa0c8; }
.del { margin-top: 6px; }
.gus { margin-top: 46px; }
.vat { margin: 56px 0 0 1px; }
.vat b { font: bold 12px/13px 'DejaVu Sans', sans-serif; color: #14498f; }

.status { height: 28px; flex: none; display: flex; align-items: center; background: linear-gradient(#d8d9df, #c2c3cd); padding: 2px 0 0 7px; }
.sep { width: 1px; height: 19px; background: #a9aab6; }
.st1 { width: 267px; }
.st2 { padding-left: 21px; width: 187px; }
.st3 { padding-left: 7px; }
.st3 + .sep { margin-left: 8px; }
.inf { width: 32px; height: 22px; background: #861d56; display: flex; align-items: center; justify-content: center; margin-left: 11px; flex: none; }
.trayic { width: 64px; height: 22px; background: #e0e0e0; flex: none; }
.grip { margin: 8px 0 0 13px; }

.orb { position: absolute; left: 8px; top: 8px; }
.taskbar { position: absolute; left: 0; top: 1040px; width: 974px; height: 40px; display: flex; background: linear-gradient(#111820, #070c14); border-top: 1px solid #535c63; align-items: flex-start; padding-left: 7px; }
.tb { width: 58px; height: 38px; display: flex; align-items: center; justify-content: center; border: 1px solid transparent; border-radius: 3px; }
.lit { border-color: #7e8286; background: linear-gradient(135deg, #777b7e, #3a3e41 45%, #161a1e 50%, #2e3235); }
.bright { border-color: #d8dadc; background: linear-gradient(135deg, #c0c3c5, #a5a8ab 45%, #666a6d 50%, #9a9d9f); }
.b1 { margin-left: 13px; }
.b2, .b3, .b4, .b5 { margin-left: 4px; }
</style>
